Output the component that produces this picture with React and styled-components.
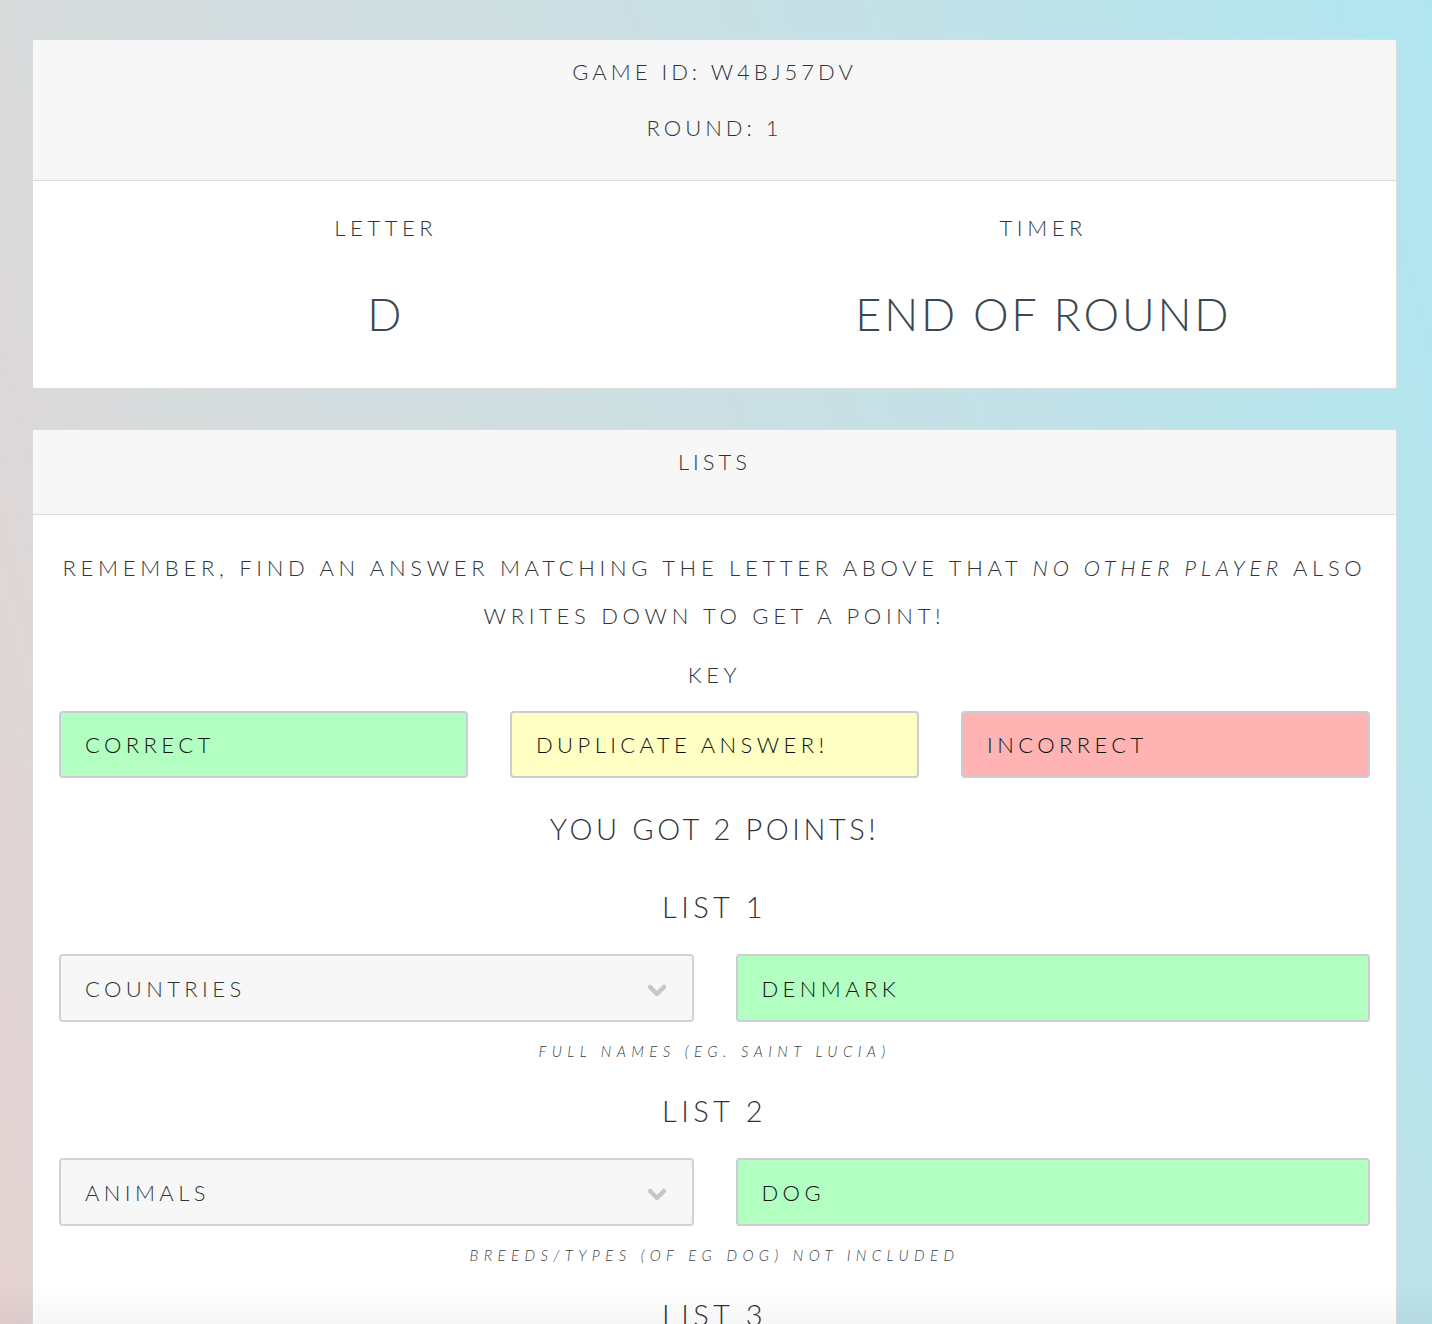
import React from "react";
import styled, { createGlobalStyle } from "styled-components";

const Global = createGlobalStyle`
  html, body { margin: 0; padding: 0; }
  body {
    font-family: Lato, "Open Sans", sans-serif;
    font-weight: 300;
    color: #33383e;
    min-height: 100vh;
    background: linear-gradient(75deg, #e6d2d2 0%, #d7dbdc 22%, #cbdfe3 55%, #b1e6f0 100%) fixed;
  }
  * { box-sizing: border-box; }
`;

const Page = styled.main`
  padding: 39px 35px 60px 32px;
  display: flex;
  flex-direction: column;
  gap: 40px;
`;

const Card = styled.section`
  background: #fff;
  border: 1px solid #dcdcdc;
  border-radius: 3px;
  overflow: hidden;
`;

const CardHeader = styled.header`
  display: flex;
  flex-direction: column;
  gap: 20px;
  background: #f7f7f7;
  border-bottom: 1px solid #dcdcdc;
  padding: 14px 20px 34px;
  text-align: center;
`;

const HeaderLine = styled.p`
  margin: 0;
  font-size: 22px;
  line-height: 36px;
  letter-spacing: 4px;
  text-transform: uppercase;
  color: #2f3439;
`;

const StatusBody = styled.div`
  display: grid;
  grid-template-columns: 1fr 1fr;
  padding: 29px 24px 44px;
  text-align: center;
`;

const StatusCol = styled.div`
  display: flex;
  flex-direction: column;
  align-items: center;
`;

const Label = styled.div`
  font-size: 22px;
  line-height: 36px;
  letter-spacing: 4.6px;
  margin-bottom: 38px;
  color: #2f3439;
`;

const BigValue = styled.div`
  font-size: 45px;
  line-height: 60px;
  letter-spacing: 2.8px;
  color: #3a4852;
`;

const ListsBody = styled.div`
  padding: 29px 26px 40px;
  display: flex;
  flex-direction: column;
  align-items: stretch;
  text-align: center;
`;

const Notice = styled.p`
  margin: 0;
  font-size: 22px;
  line-height: 48px;
  letter-spacing: 4.7px;
  color: #2f3439;
  em { font-style: italic; }
`;

const KeyTitle = styled.div`
  margin-top: 17px;
  font-size: 22px;
  line-height: 36px;
  letter-spacing: 4.6px;
  color: #2f3439;
`;

const KeyRow = styled.div`
  margin-top: 18px;
  display: grid;
  grid-template-columns: repeat(3, 1fr);
  gap: 42px;
`;

const swatch = {
  correct: "#b3ffc1",
  duplicate: "#ffffc3",
  incorrect: "#ffb3b3",
  neutral: "#f7f7f7",
};

const Box = styled.div`
  height: ${(p) => p.$h || 67}px;
  display: flex;
  align-items: center;
  justify-content: space-between;
  padding: 0 24px;
  background: ${(p) => swatch[p.$kind]};
  border: 2px solid ${(p) => (p.$kind === "neutral" ? "#d2d2d2" : "#cbcdd4")};
  border-radius: 4px;
  font-size: 22px;
  letter-spacing: 4.4px;
  text-align: left;
  color: ${(p) => (p.$kind === "neutral" ? "#2f3439" : "#0d150f")};
`;

const Score = styled.h2`
  margin: 29px 0 0;
  font-weight: 300;
  font-size: 29px;
  line-height: 44px;
  letter-spacing: 3.6px;
  color: #2f3439;
`;

const ListTitle = styled.h3`
  margin: ${(p) => p.$top || 26}px 0 0;
  font-weight: 300;
  font-size: 29px;
  line-height: 44px;
  letter-spacing: 4.4px;
  color: #2f3439;
`;

const ListRow = styled.div`
  margin-top: 25px;
  display: grid;
  grid-template-columns: 1fr 1fr;
  gap: 42px;
`;

const Hint = styled.div`
  margin-top: 17px;
  font-size: 15px;
  line-height: 24px;
  font-style: italic;
  letter-spacing: 5.4px;
  color: #3a3f45;
`;

const Chevron = () => (
  <svg width="22" height="16" viewBox="0 0 22 16" aria-hidden="true" style={{ marginTop: 4 }}>
    <polyline points="4,5 11,12 18,5" fill="none" stroke="#c6c6c6" strokeWidth="4.5" strokeLinecap="round" strokeLinejoin="round" />
  </svg>
);

const Fade = styled.div`
  position: fixed;
  left: 0;
  right: 0;
  bottom: 0;
  height: 40px;
  pointer-events: none;
  background: linear-gradient(rgba(0, 0, 0, 0), rgba(0, 0, 0, 0.035));
`;

const lists = [
  { n: 1, cat: "COUNTRIES", ans: "DENMARK", hint: "FULL NAMES (EG. SAINT LUCIA)", top: 34 },
  { n: 2, cat: "ANIMALS", ans: "DOG", hint: "BREEDS/TYPES (OF EG DOG) NOT INCLUDED", top: 26 },
  { n: 3, cat: "FRUITS", ans: "DATE", hint: "ANY EDIBLE FRUIT", top: 26 },
];

export default function App() {
  return (
    <>
      <Global />
      <Page>
        <Card>
          <CardHeader>
            <HeaderLine>Game ID: W4BJ57DV</HeaderLine>
            <HeaderLine>Round: 1</HeaderLine>
          </CardHeader>
          <StatusBody>
            <StatusCol>
              <Label>LETTER</Label>
              <BigValue>D</BigValue>
            </StatusCol>
            <StatusCol>
              <Label>TIMER</Label>
              <BigValue>END OF ROUND</BigValue>
            </StatusCol>
          </StatusBody>
        </Card>

        <Card>
          <CardHeader>
            <HeaderLine>Lists</HeaderLine>
          </CardHeader>
          <ListsBody>
            <Notice>
              REMEMBER, FIND AN ANSWER MATCHING THE LETTER ABOVE THAT <em>NO OTHER PLAYER</em> ALSO
              WRITES DOWN TO GET A POINT!
            </Notice>
            <KeyTitle>KEY</KeyTitle>
            <KeyRow>
              <Box $kind="correct">CORRECT</Box>
              <Box $kind="duplicate">DUPLICATE ANSWER!</Box>
              <Box $kind="incorrect">INCORRECT</Box>
            </KeyRow>
            <Score>YOU GOT 2 POINTS!</Score>
            {lists.map((l) => (
              <React.Fragment key={l.n}>
                <ListTitle $top={l.top}>LIST {l.n}</ListTitle>
                <ListRow>
                  <Box $kind="neutral" $h={68}>
                    <span>{l.cat}</span>
                    <Chevron />
                  </Box>
                  <Box $kind="correct" $h={68}>{l.ans}</Box>
                </ListRow>
                <Hint>{l.hint}</Hint>
              </React.Fragment>
            ))}
          </ListsBody>
        </Card>
      </Page>
      <Fade />
    </>
  );
}
